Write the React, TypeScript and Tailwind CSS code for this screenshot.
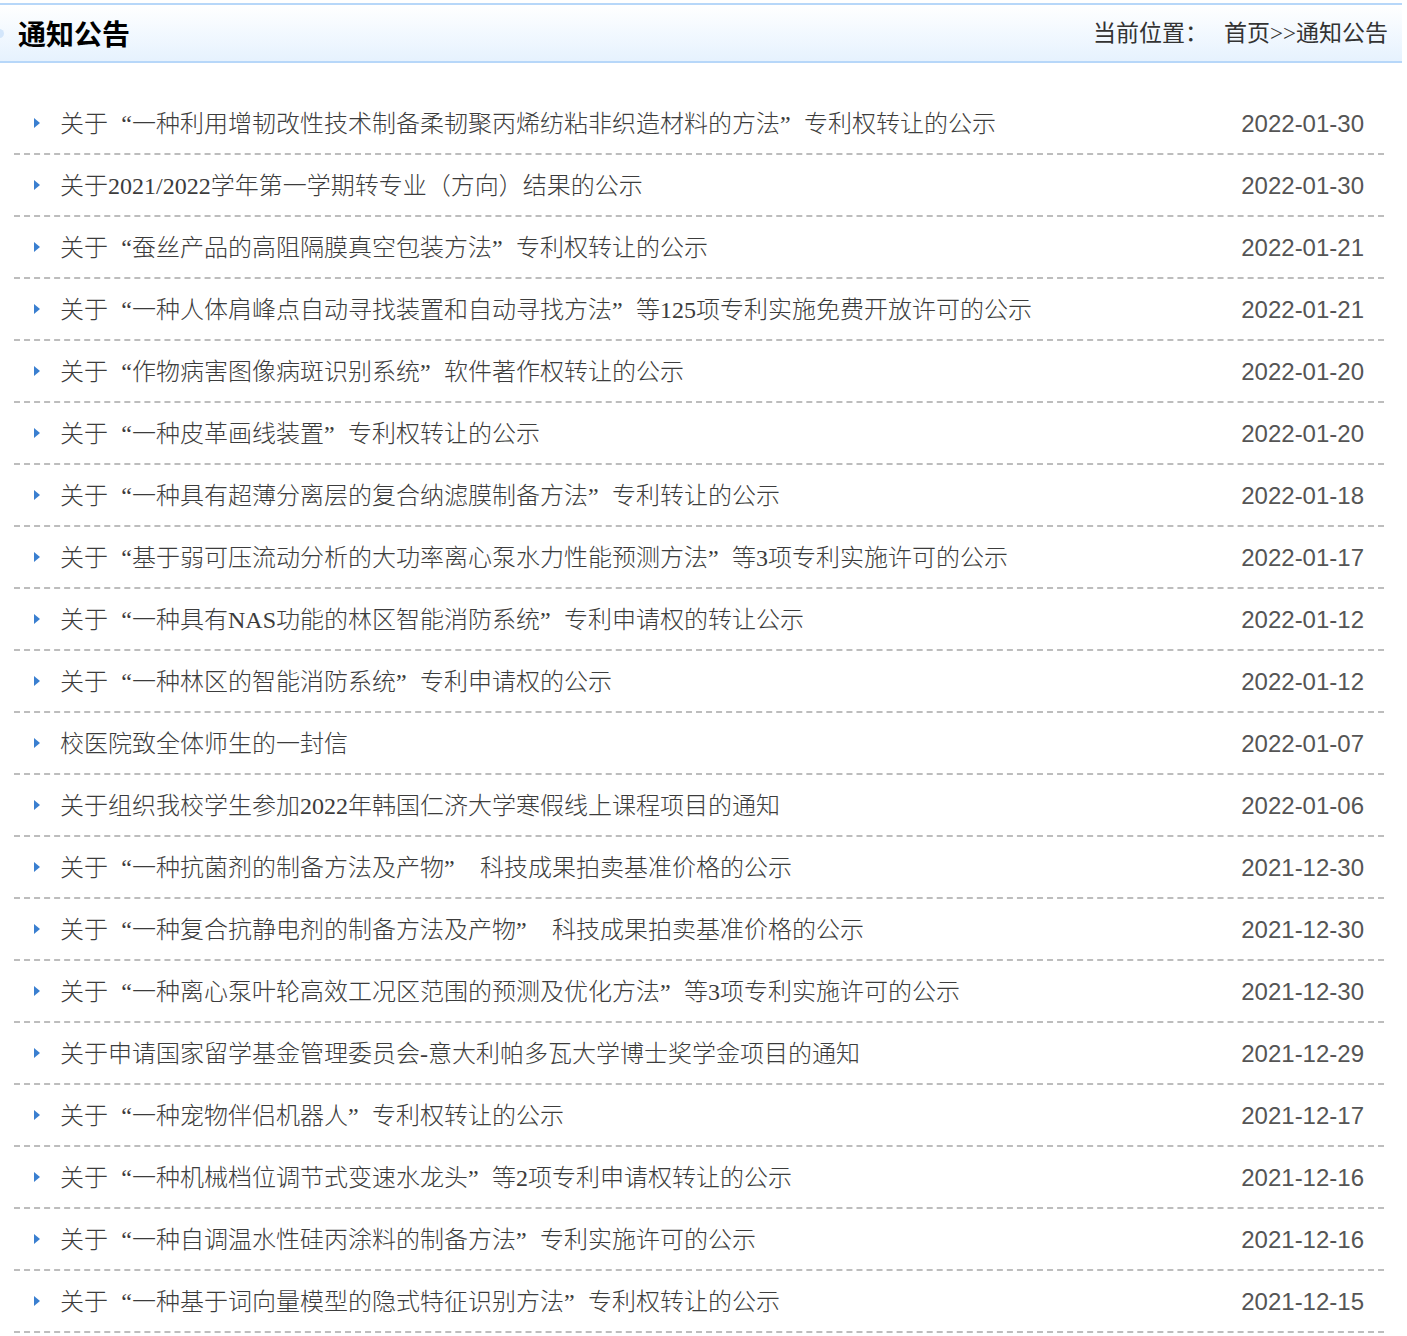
const notices = [
  { title: "关于“一种利用增韧改性技术制备柔韧聚丙烯纺粘非织造材料的方法”专利权转让的公示", date: "2022-01-30" },
  { title: "关于2021/2022学年第一学期转专业（方向）结果的公示", date: "2022-01-30" },
  { title: "关于“蚕丝产品的高阻隔膜真空包装方法”专利权转让的公示", date: "2022-01-21" },
  { title: "关于“一种人体肩峰点自动寻找装置和自动寻找方法”等125项专利实施免费开放许可的公示", date: "2022-01-21" },
  { title: "关于“作物病害图像病斑识别系统”软件著作权转让的公示", date: "2022-01-20" },
  { title: "关于“一种皮革画线装置”专利权转让的公示", date: "2022-01-20" },
  { title: "关于“一种具有超薄分离层的复合纳滤膜制备方法”专利转让的公示", date: "2022-01-18" },
  { title: "关于“基于弱可压流动分析的大功率离心泵水力性能预测方法”等3项专利实施许可的公示", date: "2022-01-17" },
  { title: "关于“一种具有NAS功能的林区智能消防系统”专利申请权的转让公示", date: "2022-01-12" },
  { title: "关于“一种林区的智能消防系统”专利申请权的公示", date: "2022-01-12" },
  { title: "校医院致全体师生的一封信", date: "2022-01-07" },
  { title: "关于组织我校学生参加2022年韩国仁济大学寒假线上课程项目的通知", date: "2022-01-06" },
  { title: "关于“一种抗菌剂的制备方法及产物”\u00a0\u00a0科技成果拍卖基准价格的公示", date: "2021-12-30" },
  { title: "关于“一种复合抗静电剂的制备方法及产物”\u00a0\u00a0科技成果拍卖基准价格的公示", date: "2021-12-30" },
  { title: "关于“一种离心泵叶轮高效工况区范围的预测及优化方法”等3项专利实施许可的公示", date: "2021-12-30" },
  { title: "关于申请国家留学基金管理委员会-意大利帕多瓦大学博士奖学金项目的通知", date: "2021-12-29" },
  { title: "关于“一种宠物伴侣机器人”专利权转让的公示", date: "2021-12-17" },
  { title: "关于“一种机械档位调节式变速水龙头”等2项专利申请权转让的公示", date: "2021-12-16" },
  { title: "关于“一种自调温水性硅丙涂料的制备方法”专利实施许可的公示", date: "2021-12-16" },
  { title: "关于“一种基于词向量模型的隐式特征识别方法”专利权转让的公示", date: "2021-12-15" },
];

function Arrow() {
  return (
    <svg width="6" height="10" viewBox="0 0 6 10" className="shrink-0">
      <path d="M0 0 L6 5 L0 10 Z" fill="#3a7fd0" />
    </svg>
  );
}

// quotes in the original take a full em cell; opening sits right, closing sits left
function Title({ text }: { text: string }) {
  const parts = text.split(/([“”])/);
  return (
    <>
      {parts.map((p, i) =>
        p === "“" ? (
          <span key={i} className="inline-block w-[24px] text-right">{p}</span>
        ) : p === "”" ? (
          <span key={i} className="inline-block w-[24px] text-left">{p}</span>
        ) : (
          <span key={i}>{p}</span>
        )
      )}
    </>
  );
}

export default function App() {
  return (
    <div className="w-[1407px] min-h-[1336px] bg-white pt-[3px]">
      {/* header bar */}
      <div className="w-[1402px] h-[60px] flex items-center justify-between border-y-2 border-[#b7d7f9] bg-gradient-to-b from-white to-[#e6f2fe] overflow-hidden">
        <div className="flex items-center">
          <div className="w-[9px] h-[9px] rounded-full bg-[#d3e6fb] -ml-[5px]" />
          <h2 className="ml-[14px] text-[28px] font-bold text-black leading-none font-['Noto_Sans_CJK_SC',sans-serif]">
            通知公告
          </h2>
        </div>
        <div className="pr-[14px] text-[23px] text-[#333] font-['Liberation_Serif','Noto_Sans_CJK_SC',serif] leading-none">
          当前位置：<span className="ml-[16px]">首页&gt;&gt;通知公告</span>
        </div>
      </div>

      {/* list */}
      <ul className="mx-[14px] w-[1370px] pt-[30px]">
        {notices.map((n, i) => (
          <li
            key={i}
            className="h-[62px] flex items-center border-b-2 border-dashed border-[#bdbdbd] pl-[20px] pr-[20px]"
          >
            <Arrow />
            <span className="ml-[20px] flex-1 pt-[2px] text-[24px] text-[#3c3c3c] whitespace-nowrap font-['Liberation_Serif','Noto_Sans_CJK_SC',serif] font-light">
              <Title text={n.title} />
            </span>
            <span className="pt-[2px] text-[24px] text-[#555] font-['Liberation_Sans',Arial,sans-serif]">
              {n.date}
            </span>
          </li>
        ))}
      </ul>
    </div>
  );
}
